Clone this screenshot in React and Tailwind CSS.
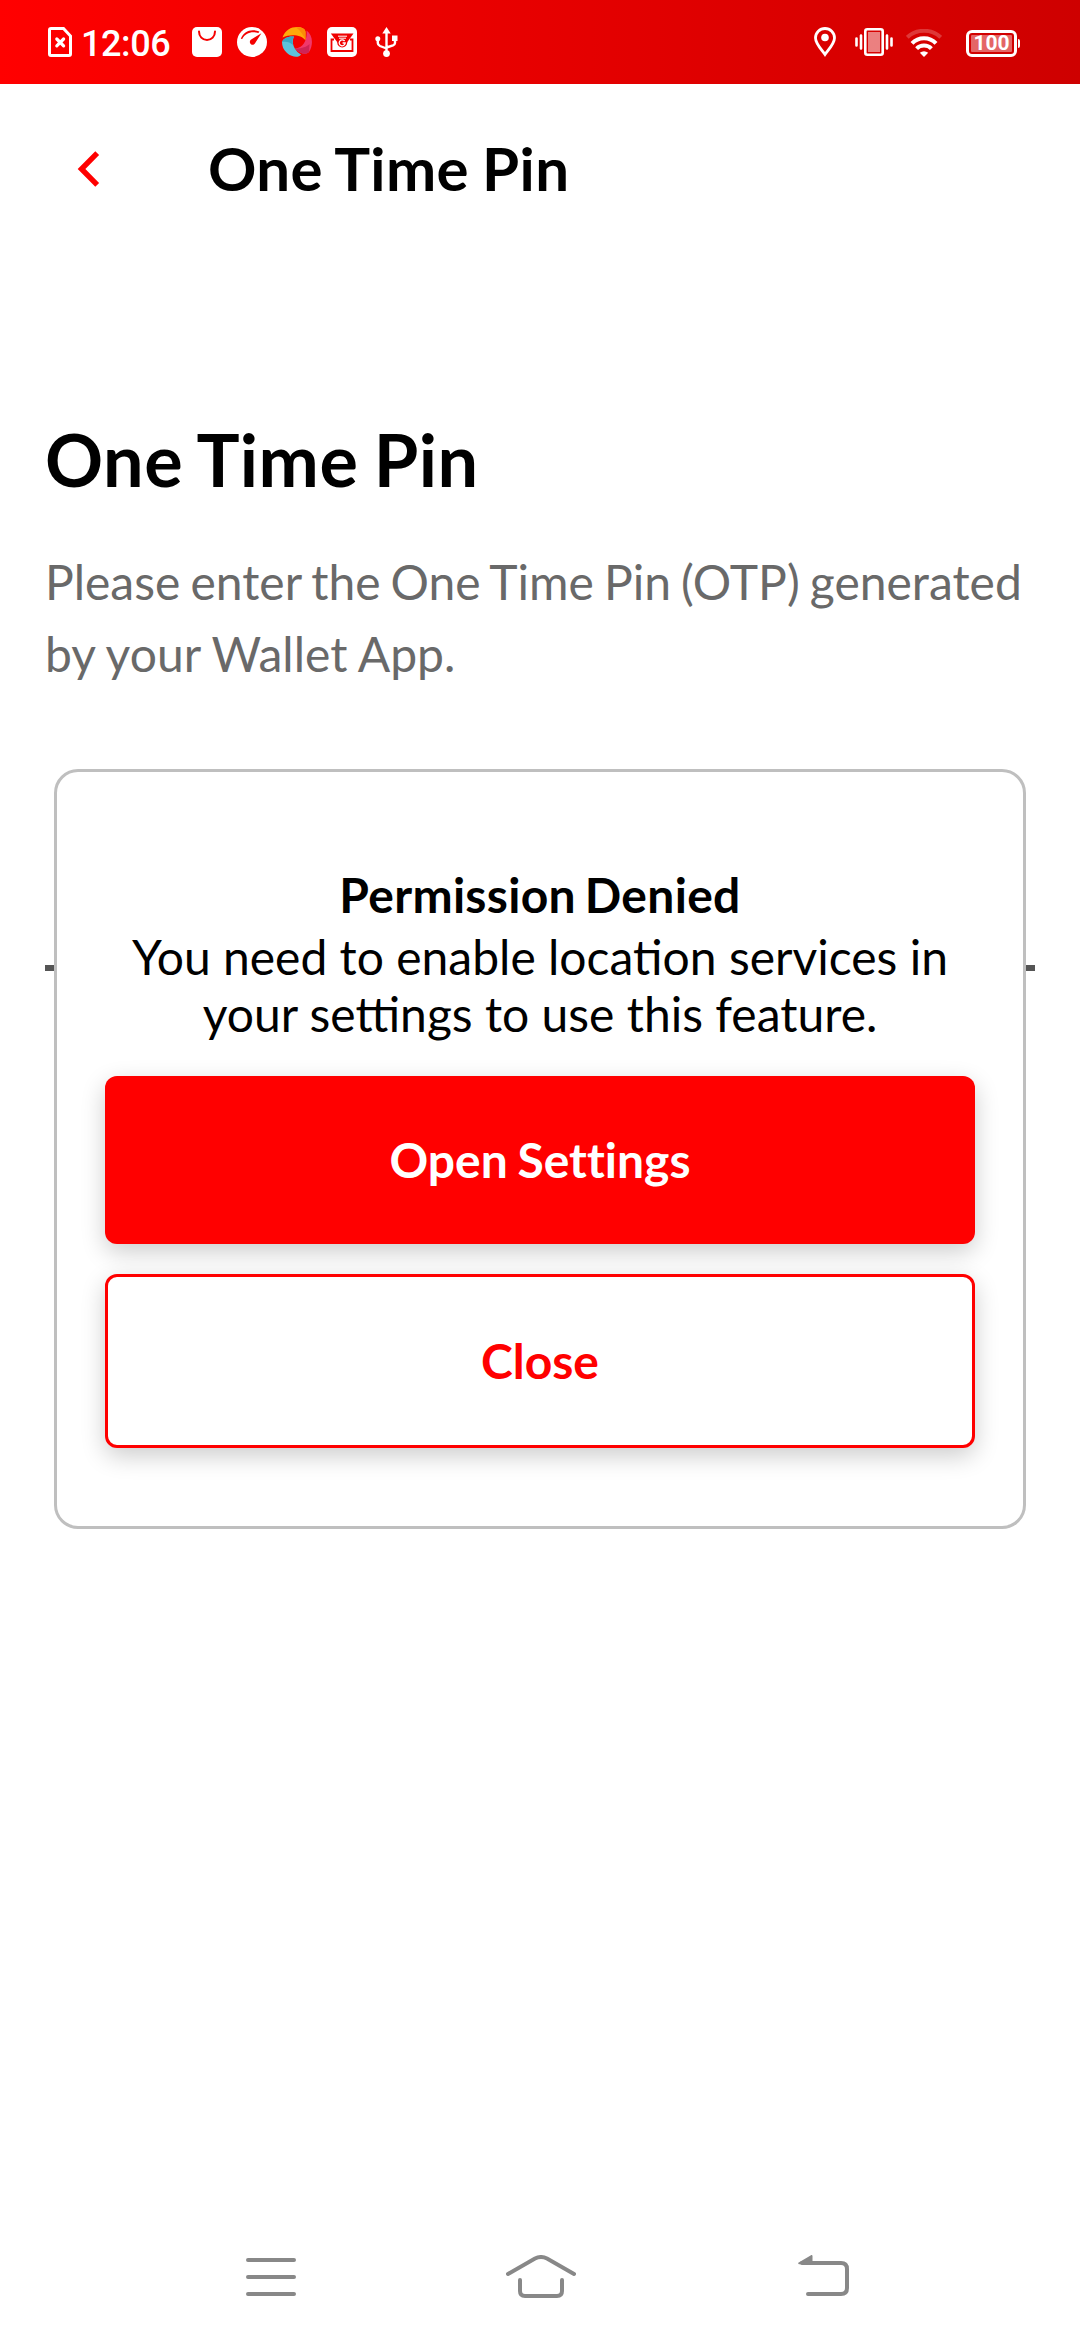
function SimIcon() {
  return (
    <svg className="h-[30px] w-6" viewBox="0 0 24 30" fill="none" stroke="#fff">
      <path d="M3 1.5H15.5L22.5 9V27Q22.5 28.5 21 28.5H3Q1.5 28.5 1.5 27V3Q1.5 1.5 3 1.5Z" strokeWidth="3" />
      <path d="M8.8 12L15.6 18.8M15.6 12L8.8 18.8" strokeWidth="3.2" strokeLinecap="round" />
    </svg>
  );
}

function BagIcon() {
  return (
    <svg className="size-[30px]" viewBox="0 0 30 30" fill="none">
      <rect width="30" height="30" rx="5" fill="#fff" />
      <path d="M7 4.5C7 9.5 10.5 13 15 13S23 9.5 23 4.5" stroke="#f60000" strokeWidth="2" strokeLinecap="round" />
    </svg>
  );
}

function GaugeIcon() {
  return (
    <svg className="size-[30px]" viewBox="0 0 30 30" fill="none">
      <circle cx="15" cy="15" r="15" fill="#fff" />
      <path d="M3.8 11.8C6.5 4.2 14.5 1.2 22.4 4.6L21.4 6C14.5 4 8.2 6 5.2 12Z" fill="#f40000" />
      <path d="M24.4 6.2L18.2 16A2.8 2.8 0 1 1 13.8 12.8Z" fill="#f40000" />
    </svg>
  );
}

function SwirlIcon() {
  return (
    <svg className="size-[30px]" viewBox="0 0 30 30">
      <path d="M0.5 10.5C3 3 9 0 15 0C20 0 23.5 2 23.5 5V13.5C20 8 9 6.5 0.5 10.5Z" fill="#ffa90a" />
      <path d="M14 0.2C20 0 23.5 2 23.5 5V13.5C22 9 19 4 14 0.2Z" fill="#fb8c08" />
      <path d="M24.5 3.5C31 8 31.5 18 27 25C24 28 19 27.5 13 21.5C22 21 25.5 12 24.5 3.5Z" fill="#f0386b" />
      <path d="M27 25C24 28 19 27.5 13 21.5C18 22 25 20 27.5 17Z" fill="#cf2457" />
      <path d="M0 15C1 11.5 6 9 12 9.5C9 16 12 23 19 27.5C17 31 10 30.5 5 26C1.5 23 0 19 0 15Z" fill="#5dc2dc" />
      <path d="M0 15C1 11.5 6 9 12 9.5C10 13 10.5 16 11.2 18C8 15 4 14 0 15Z" fill="#3aa6c4" />
    </svg>
  );
}

function MailIcon() {
  return (
    <svg className="size-[30px]" viewBox="0 0 30 30" fill="none">
      <rect width="30" height="30" rx="5" fill="#fff" />
      <path d="M7 12.5H4.5V24H25.5V12.5H23" stroke="#f00000" strokeWidth="1.8" />
      <path d="M3.8 6.5H26.5L20 15.5H10.5Z" fill="#f00000" />
      <circle cx="15.2" cy="15.5" r="5" fill="#f00000" />
      <path d="M11 9.2H20M12 11.2H19" stroke="#fff" strokeWidth="1" />
      <path d="M17.6 14A3 3 0 1 0 18.2 16H15.6" stroke="#fff" strokeWidth="1.3" />
    </svg>
  );
}

function UsbIcon() {
  return (
    <svg className="h-[30px] w-[23px]" viewBox="0 0 23 30" fill="none" stroke="#fff" strokeWidth="2.4">
      <path d="M11.5 5V26M2.8 12V16Q2.8 18 5 19L11.5 21.5M20 12V16Q20 17.5 18 18.3L11.5 20.5" />
      <path d="M11.5 0L15.7 6.5H7.3Z" fill="#fff" stroke="none" />
      <circle cx="11.5" cy="26.6" r="3.4" fill="#fff" stroke="none" />
      <circle cx="2.8" cy="11.7" r="2.5" fill="#fff" stroke="none" />
      <path d="M17 8.5H22.5V14H17Z" fill="#fff" stroke="none" />
    </svg>
  );
}

function PinIcon() {
  return (
    <svg className="h-[30px] w-[22px]" viewBox="0 0 22 30" fill="none">
      <path d="M11 27.5C7 22 1.5 16.5 1.5 11A9.5 9.5 0 0 1 20.5 11C20.5 16.5 15 22 11 27.5Z" stroke="#fff" strokeWidth="2.8" />
      <circle cx="11" cy="10.5" r="3.8" fill="#fff" />
    </svg>
  );
}

function VibrateIcon() {
  return (
    <svg className="h-[28px] w-[38px]" viewBox="0 0 38 28" fill="none" stroke="#fff">
      <rect x="10.3" y="1.3" width="17.4" height="25.4" rx="2" strokeWidth="2.6" />
      <rect x="13" y="4" width="12" height="20" fill="#fff" fillOpacity=".5" stroke="none" />
      <path d="M1.5 10.5V17.5M36.5 10.5V17.5M6 7.5V20.5M32 7.5V20.5" strokeWidth="2.6" strokeLinecap="round" />
    </svg>
  );
}

function WifiIcon() {
  return (
    <svg className="h-[28px] w-9" viewBox="0 0 36 28" fill="none" stroke="#fff" strokeWidth="4">
      <path d="M1.3 8.3C10.5 -0.4 25.5 -0.4 34.7 8.3" strokeOpacity=".22" />
      <path d="M6 14.3C12.5 7.4 23.5 7.4 30 14.3" />
      <path d="M10.6 19.6C14.5 15.6 21.5 15.6 25.4 19.6" />
      <path d="M18 28L13.8 23.8Q18 20.8 22.2 23.8Z" fill="#fff" stroke="none" />
    </svg>
  );
}

function Battery() {
  return (
    <div className="flex items-center gap-px">
      <div className="h-[27px] w-[51px] rounded-[6px] border-3 border-white p-[2px]">
        <div className="flex h-[17px] items-center justify-center rounded-[1px] bg-white/40 font-[Roboto] text-[21px] leading-none font-bold text-white">
          100
        </div>
      </div>
      <div className="h-[9px] w-[2px] rounded-r-sm bg-white" />
    </div>
  );
}

function StatusBar() {
  return (
    <div className="flex h-[84px] items-center justify-between bg-linear-to-r from-[#ff0000] to-[#ce0000] pr-[60px] pl-12">
      <div className="flex items-center">
        <SimIcon />
        <span className="ml-[9px] w-[111px] pt-[3px] font-[Roboto] text-[36px] leading-[42px] font-medium tracking-[-0.4px] text-white">
          12:06
        </span>
        <div className="flex items-center gap-[15px]">
          <BagIcon />
          <GaugeIcon />
          <SwirlIcon />
          <MailIcon />
        </div>
        <div className="ml-[18px]">
          <UsbIcon />
        </div>
      </div>
      <div className="flex items-center">
        <PinIcon />
        <div className="ml-[19px]">
          <VibrateIcon />
        </div>
        <div className="mt-[2px] ml-[13px]">
          <WifiIcon />
        </div>
        <div className="mt-[3px] ml-6">
          <Battery />
        </div>
      </div>
    </div>
  );
}

function PermissionDialog() {
  return (
    <div className="absolute top-[769px] left-[54px] flex h-[760px] w-[972px] flex-col rounded-[24px] border-3 border-[#bfbfbf] bg-white px-12 pt-[94px] text-center text-[48px] text-black">
      <h2 className="leading-[58px] font-bold tracking-[0.3px] [word-spacing:-3px]">Permission Denied</h2>
      <p className="mt-[4px] leading-[57px]">
        You need to enable location services in
        <br />
        your settings to use this feature.
      </p>
      <button className="mt-[34px] h-[168px] shrink-0 rounded-[12px] bg-[#ff0000] font-bold text-white shadow-[0_8px_24px_rgba(0,0,0,0.2)] [font-variant-ligatures:none] [word-spacing:-2px]">
        Open Settings
      </button>
      <button className="mt-[30px] h-[174px] shrink-0 rounded-[12px] border-3 border-[#ff0000] bg-white font-bold text-[#ff0000] shadow-[0_8px_24px_rgba(0,0,0,0.2)]">
        Close
      </button>
    </div>
  );
}

function NavBar() {
  return (
    <div className="mt-auto flex h-[126px] items-center pl-[246px]">
      <svg className="h-[44px] w-[50px]" viewBox="0 0 50 44" fill="none" stroke="#888" strokeWidth="4" strokeLinecap="round">
        <path d="M2 5H48M2 22H48M2 39H48" />
      </svg>
      <svg className="ml-[210px] h-[44px] w-[70px]" viewBox="0 0 70 44" fill="none" stroke="#888" strokeWidth="4" strokeLinecap="round">
        <path d="M2 19L29 3.5Q35 .5 41 3.5L68 19" />
        <path d="M14 25V36Q14 41 19 41H51Q56 41 56 36V25" />
      </svg>
      <svg className="ml-[222px] h-[44px] w-[51px]" viewBox="0 0 51 44" fill="none" stroke="#888" strokeWidth="4" strokeLinecap="round">
        <path d="M4 8H43Q49 8 49 14V33Q49 39 43 39H10" />
        <path d="M1.2 8.3L13.5 1V8Z" fill="#888" strokeWidth="2" strokeLinejoin="round" />
      </svg>
    </div>
  );
}

export default function App() {
  return (
    <div className="relative flex h-[2340px] w-[1080px] flex-col bg-white font-[Lato,sans-serif]">
      <StatusBar />
      <header className="flex h-[168px] items-center pl-[77px]">
        <svg className="h-[42px] w-[24px]" viewBox="0 0 24 42" fill="none" stroke="#ff0000" strokeWidth="5.4">
          <path d="M20.2 6.2L4.5 22L20.2 37.8" />
        </svg>
        <h1 className="ml-[107px] text-[60px] leading-[72px] font-bold tracking-[0.4px] text-black [word-spacing:-2px]">One Time Pin</h1>
      </header>
      <main className="px-[45px] pt-[164px]">
        <h2 className="text-[72px] leading-[86px] font-bold tracking-[0.5px] text-black [word-spacing:-2.5px]">One Time Pin</h2>
        <p className="mt-[44px] text-[48px] leading-[72px] whitespace-nowrap text-[#696969] [word-spacing:-2.2px]">
          Please enter the One Time Pin (OTP) generated
          <br />
          <span className="[word-spacing:-0.3px]">by your Wallet App.</span>
        </p>
        <div className="mt-[68px] h-[213px] border-b-6 border-[#555]" />
      </main>
      <PermissionDialog />
      <NavBar />
    </div>
  );
}
